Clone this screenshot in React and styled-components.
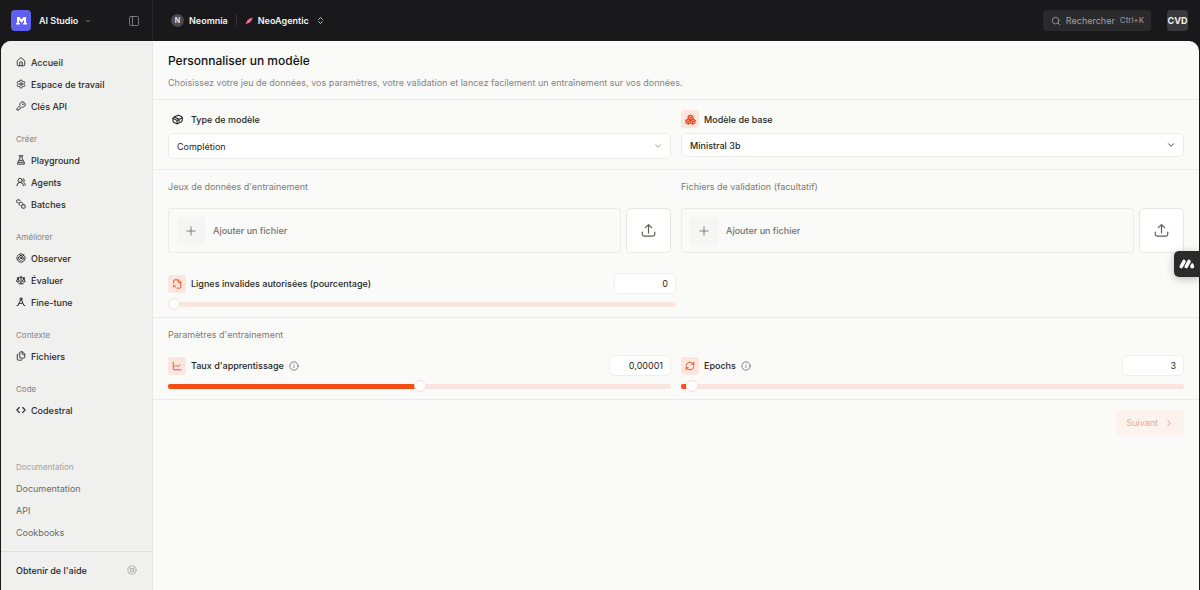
import React, { useState } from "react";
import styled, { createGlobalStyle } from "styled-components";
import {
  Boxes,
  ChartLine,
  ChevronDown,
  ChevronRight,
  ChevronsUpDown,
  Files,
  House,
  Info,
  KeyRound,
  LifeBuoy,
  PanelLeft,
  Plus,
  Radar,
  RefreshCw,
  Scale,
  Search,
  Settings,
  UsersRound,
} from "lucide-react";

const Svg = ({ size = 10, stroke = 2.2, children }) => (
  <svg
    width={size}
    height={size}
    viewBox="0 0 24 24"
    fill="none"
    stroke="currentColor"
    strokeWidth={stroke}
    strokeLinecap="round"
    strokeLinejoin="round"
    aria-hidden="true"
  >
    {children}
  </svg>
);

const LogoIcon = () => (
  <svg width="11" height="8" viewBox="0 0 22 16" fill="#fff" aria-hidden="true">
    <path d="M2 0h5l4 5 4-5h5v12h2v3h-8v-3h2V6l-5 5.500L6 6v6h2v3H0v-3h2z" />
  </svg>
);

const FlaskIcon = () => (
  <Svg>
    <path d="M7.500 2h9M9.500 2v6L4 18v4h16v-4L14.500 8V2" />
    <path d="M9 13h6M6 17.500h12" />
  </Svg>
);

const BatchIcon = () => (
  <Svg>
    <path d="M5 9H4a2.500 2.500 0 0 1-2.500-2.500v-2A2.500 2.500 0 0 1 4 2h3.500A2.500 2.500 0 0 1 10 4" />
    <path d="M10 15.500A2.500 2.500 0 0 1 7.500 13v-2.500A2.500 2.500 0 0 1 10 8h3.500a2.500 2.500 0 0 1 2.500 2" />
    <rect x="13.500" y="13.500" width="8.500" height="8.500" rx="2.500" />
  </Svg>
);

const CompassIcon = () => (
  <Svg stroke={2.4}>
    <circle cx="12" cy="4.500" r="2.500" />
    <path d="M10.800 7 5 20.500H2.500M13.200 7 19 20.500h2.500M7.500 15.500c3 .8 6 .3 8.500-1.500" />
  </Svg>
);

const CodeIcon = () => (
  <Svg stroke={2.6}>
    <path d="m8 6-6 6 6 6M16 6l6 6-6 6" />
  </Svg>
);

const CubeIcon = () => (
  <Svg size={11} stroke={2.4}>
    <path d="M2 9.500 5 6l9-3.500 6.500 3L22.500 8v6L20 17.500l-9 4L3.500 18 2 15z" />
    <path d="m2 9.500 9 4.500 11.500-6M11 14v7M6.500 7l9 4.500v4.500" />
  </Svg>
);

const InvalidFileIcon = () => (
  <Svg>
    <path d="M4 10V4.500A2.500 2.500 0 0 1 6.500 2H15l6 6v11.500a2.500 2.500 0 0 1-2.500 2.500H12" />
    <path d="M14.500 2v6H21M3 14.500l5.500 5.500M8.500 14.500 3 20" />
  </Svg>
);

const UploadIcon = () => (
  <Svg size={15} stroke={1.9}>
    <path d="M12 16V2.500M7 7.500l5-5 5 5" />
    <path d="M2 14.500V18a3 3 0 0 0 3 3h14a3 3 0 0 0 3-3v-3.500" />
  </Svg>
);

const FeatherIcon = () => (
  <svg width="8" height="8" viewBox="0 0 16 16" aria-hidden="true">
    <path d="M1 15 3.500 8.500C6 4 10 1.500 15 1c0 5-2.500 8.500-7 11l-4.500.5z" fill="#e0587c" />
    <path d="M2 14 11 5" stroke="#f7b9c8" strokeWidth="1.500" />
  </svg>
);

const WidgetLogo = () => (
  <svg width="16" height="10" viewBox="0 0 16 10" aria-hidden="true">
    <path d="M2.300 7.500 5 2.500M7.300 7.500 10 2.500" stroke="#fff" strokeWidth="3.600" strokeLinecap="round" />
    <path d="M13.200 3.800c1.200 1.600 2 2.500 2 3.600a2 2 0 0 1-4 0c0-1.100.8-2 2-3.600z" fill="#fff" />
  </svg>
);

const navGroups = [
  {
    items: [
      { label: "Accueil", icon: <House size={10} strokeWidth={2.2} /> },
      { label: "Espace de travail", icon: <Settings size={10} strokeWidth={2.2} /> },
      { label: "Clés API", icon: <KeyRound size={10} strokeWidth={2.2} /> },
    ],
  },
  {
    title: "Créer",
    items: [
      { label: "Playground", icon: <FlaskIcon /> },
      { label: "Agents", icon: <UsersRound size={10} strokeWidth={2.2} /> },
      { label: "Batches", icon: <BatchIcon /> },
    ],
  },
  {
    title: "Améliorer",
    items: [
      { label: "Observer", icon: <Radar size={10} strokeWidth={2.4} /> },
      { label: "Évaluer", icon: <Scale size={10} strokeWidth={2.4} /> },
      { label: "Fine-tune", icon: <CompassIcon /> },
    ],
  },
  {
    title: "Contexte",
    items: [{ label: "Fichiers", icon: <Files size={10} strokeWidth={2.2} /> }],
  },
  { title: "Code", items: [{ label: "Codestral", icon: <CodeIcon /> }] },
];

const docLinks = ["Documentation", "API", "Cookbooks"];

const Sidebar = () => (
  <SidebarWrapper>
    {navGroups.map((group, index) => (
      <NavGroup key={index}>
        {group.title && <GroupTitle>{group.title}</GroupTitle>}
        {group.items.map((item) => (
          <NavLink href="#" key={item.label}>
            {item.icon}
            {item.label}
          </NavLink>
        ))}
      </NavGroup>
    ))}
    <DocGroup>
      <GroupTitle $faint>Documentation</GroupTitle>
      {docLinks.map((label) => (
        <NavLink href="#" $muted key={label}>
          {label}
        </NavLink>
      ))}
    </DocGroup>
    <HelpButton type="button">
      Obtenir de l'aide
      <LifeBuoy size={10} color="#a8a7a4" />
    </HelpButton>
  </SidebarWrapper>
);

const SelectField = ({ id, label, icon, tinted, value, tall, strong }) => (
  <Field>
    <FieldLabel htmlFor={id}>
      <IconTile $tinted={tinted}>{icon}</IconTile>
      {label}
    </FieldLabel>
    <SelectBox>
      <Select id={id} defaultValue={value} $tall={tall} $strong={strong}>
        <option>{value}</option>
      </Select>
      <ChevronDown size={10} color={strong ? "#222" : "#8a8985"} />
    </SelectBox>
  </Field>
);

const FilePicker = ({ title }) => (
  <Field>
    <SectionTitle>{title}</SectionTitle>
    <FileRow>
      <AddFile type="button">
        <PlusTile>
          <Plus size={14} strokeWidth={1.6} />
        </PlusTile>
        Ajouter un fichier
      </AddFile>
      <UploadButton type="button" aria-label="Importer">
        <UploadIcon />
      </UploadButton>
    </FileRow>
  </Field>
);

const SliderField = ({ id, label, icon, info, text, percent }) => {
  const [value, setValue] = useState(percent);

  return (
    <Field>
      <SliderHeader>
        <FieldLabel htmlFor={id}>
          <IconTile $tinted>{icon}</IconTile>
          {label}
          {info && <Info size={10} color="#6f6e6a" strokeWidth={2} />}
        </FieldLabel>
        <NumberInput id={id} defaultValue={text} />
      </SliderHeader>
      <Slider
        type="range"
        aria-label={label}
        min="0"
        max="100"
        value={value}
        onChange={(e) => setValue(Number(e.target.value))}
        style={{ "--fill": `${value}%` }}
      />
    </Field>
  );
};

const App = () => (
  <Page>
    <GlobalStyle />
    <TopBar>
      <Brand>
        <Logo>
          <LogoIcon />
        </Logo>
        <BrandButton type="button">
          AI Studio
          <ChevronDown size={6} color="#a1a1a6" strokeWidth={3} />
        </BrandButton>
        <PanelButton type="button" aria-label="Réduire le menu">
          <PanelLeft size={12} strokeWidth={1.6} />
        </PanelButton>
      </Brand>
      <Crumbs>
        <CrumbButton type="button">
          <OrgBadge>N</OrgBadge>
          Neomnia
        </CrumbButton>
        <CrumbDivider />
        <CrumbButton type="button">
          <FeatherIcon />
          NeoAgentic
          <SortIcon size={9} />
        </CrumbButton>
      </Crumbs>
      <SearchButton type="button">
        <Search size={10} />
        Rechercher
        <Shortcut>Ctrl+K</Shortcut>
      </SearchButton>
      <Avatar type="button">CVD</Avatar>
    </TopBar>
    <Body>
      <Sidebar />
      <Main>
        <Header>
          <Title>Personnaliser un modèle</Title>
          <Subtitle>
            Choisissez votre jeu de données, vos paramètres, votre validation et lancez
            facilement un entraînement sur vos données.
          </Subtitle>
        </Header>
        <ModelSection>
          <SelectField id="type" label="Type de modèle" icon={<CubeIcon />} value="Complétion" tall />
          <SelectField
            id="base"
            label="Modèle de base"
            icon={<Boxes size={11} strokeWidth={2.6} />}
            value="Ministral 3b"
            tinted
            strong
          />
        </ModelSection>
        <DataSection>
          <Columns>
            <FilePicker title="Jeux de données d'entrainement" />
            <FilePicker title="Fichiers de validation (facultatif)" />
          </Columns>
          <HalfWidth>
            <SliderField
              id="invalid"
              label="Lignes invalides autorisées (pourcentage)"
              icon={<InvalidFileIcon />}
              text="0"
              percent={0}
            />
          </HalfWidth>
        </DataSection>
        <TrainingSection>
          <SectionTitle>Paramètres d'entrainement</SectionTitle>
          <Columns>
            <SliderField
              id="rate"
              label="Taux d'apprentissage"
              icon={<ChartLine size={10} strokeWidth={2.2} />}
              text="0,00001"
              percent={50}
              info
            />
            <SliderField
              id="epochs"
              label="Epochs"
              icon={<RefreshCw size={10} strokeWidth={2.2} />}
              text="3"
              percent={1}
              info
            />
          </Columns>
        </TrainingSection>
        <Actions>
          <NextButton type="button" disabled>
            Suivant
            <ChevronRight size={10} strokeWidth={2.5} />
          </NextButton>
        </Actions>
      </Main>
    </Body>
    <Widget type="button" aria-label="Assistant">
      <WidgetLogo />
    </Widget>
  </Page>
);

const GlobalStyle = createGlobalStyle`
  * {
    box-sizing: border-box;
  }

  body {
    margin: 0;
    background: #19191b;
    color: #262626;
    font-family: Inter, "Liberation Sans", sans-serif;
    font-size: 9px;
    line-height: 13px;
  }

  button, input, select {
    margin: 0;
    padding: 0;
    border: 0;
    background: none;
    color: inherit;
    font: inherit;
  }

  svg {
    flex: none;
  }
`;

const Page = styled.div`
  display: flex;
  flex-direction: column;
  min-height: 100vh;
`;

const TopBar = styled.header`
  display: flex;
  align-items: center;
  height: 41px;
  padding-right: 12px;
  color: #f2f2f3;
`;

const Brand = styled.div`
  display: flex;
  align-items: center;
  align-self: stretch;
  width: 153px;
  padding: 0 12px 0 11px;
  border-right: 1px solid #29292c;
`;

const Logo = styled.div`
  display: flex;
  align-items: center;
  justify-content: center;
  width: 20px;
  height: 21px;
  margin-right: 8px;
  border-radius: 4px;
  background: #615ff0;
`;

const BrandButton = styled.button`
  display: flex;
  align-items: center;
  gap: 7px;
  font-weight: 600;
`;

const PanelButton = styled.button`
  display: flex;
  margin-left: auto;
  color: #8b8b90;
`;

const Crumbs = styled.nav`
  display: flex;
  align-items: center;
  flex: 1;
  gap: 8px;
  padding-left: 18px;
`;

const CrumbButton = styled.button`
  display: flex;
  align-items: center;
  gap: 5px;
  font-weight: 600;
`;

const OrgBadge = styled.span`
  display: flex;
  align-items: center;
  justify-content: center;
  width: 13px;
  height: 13px;
  border-radius: 50%;
  background: #4a4a4e;
  font-size: 7px;
`;

const CrumbDivider = styled.span`
  width: 1px;
  height: 13px;
  background: #323235;
`;

const SortIcon = styled(ChevronsUpDown)`
  margin-left: 2px;
`;

const SearchButton = styled.button`
  display: flex;
  align-items: center;
  gap: 5px;
  height: 21px;
  margin-right: 16px;
  padding: 0 7px 0 8px;
  border-radius: 4px;
  background: #2a2a2d;
  color: #a0a0a5;
`;

const Shortcut = styled.span`
  font-size: 8px;
`;

const Avatar = styled.button`
  width: 21px;
  height: 21px;
  display: flex;
  align-items: center;
  justify-content: center;
  border-radius: 4px;
  background: #39393c;
  font-weight: 700;
`;

const Body = styled.div`
  display: flex;
  flex: 1;
  margin: 0 1px;
  border-radius: 10px 10px 0 0;
  background: #fafaf8;
  overflow: hidden;
`;

const SidebarWrapper = styled.aside`
  display: flex;
  flex: none;
  flex-direction: column;
  gap: 12px;
  width: 152px;
  padding-top: 10px;
  border-right: 1px solid #e6e6e3;
  background: #f0f0ee;
`;

const NavGroup = styled.nav`
  display: flex;
  flex-direction: column;
  padding: 0 15px;
`;

const DocGroup = styled(NavGroup)`
  margin-top: auto;
  margin-bottom: -4px;
`;

const GroupTitle = styled.div`
  color: ${(props) => (props.$faint ? "#a3a29e" : "#85847f")};
  font-size: 8px;
  line-height: 20px;
`;

const NavLink = styled.a`
  display: flex;
  align-items: center;
  gap: 5px;
  height: 22px;
  color: ${(props) => (props.$muted ? "#6b6a66" : "#2a2a28")};
  font-weight: ${(props) => (props.$muted ? 400 : 500)};
  text-decoration: none;
`;

const HelpButton = styled.button`
  display: flex;
  align-items: center;
  justify-content: space-between;
  height: 39px;
  padding: 0 15px 2px;
  border-top: 1px solid #dfdfdc;
  font-weight: 500;
`;

const Main = styled.main`
  flex: 1;
  min-width: 0;
`;

const Section = styled.section`
  padding: 0 15px;
  border-bottom: 1px solid #ebebe8;
`;

const Header = styled(Section)`
  padding-top: 12px;
  padding-bottom: 10px;
`;

const Title = styled.h1`
  margin: 0 0 7px;
  color: #111;
  font-size: 12px;
  font-weight: 500;
  line-height: 16px;
`;

const Subtitle = styled.p`
  margin: 0;
  color: #85847f;
`;

const Columns = styled.div`
  display: grid;
  grid-template-columns: 1fr 1fr;
  gap: 10px;
`;

const ModelSection = styled(Section)`
  display: grid;
  grid-template-columns: 1fr 1fr;
  align-items: start;
  gap: 10px;
  padding-top: 10px;
  padding-bottom: 10px;
`;

const DataSection = styled(Section)`
  padding-top: 10px;
  padding-bottom: 7px;
`;

const TrainingSection = styled(Section)`
  padding-top: 10px;
  padding-bottom: 7px;

  ${Columns} {
    margin-top: 14px;
  }
`;

const HalfWidth = styled.div`
  width: 50%;
  margin-top: 20px;
`;

const Field = styled.div`
  min-width: 0;
`;

const FieldLabel = styled.label`
  display: flex;
  align-items: center;
  gap: 5px;
  font-weight: 500;
`;

const IconTile = styled.span`
  display: flex;
  align-items: center;
  justify-content: center;
  width: 18px;
  height: 18px;
  border-radius: 3px;
  background: ${(props) => (props.$tinted ? "#fce6e0" : "none")};
  color: ${(props) => (props.$tinted ? "#e8491d" : "#262626")};
`;

const SelectBox = styled.div`
  position: relative;
  margin-top: 5px;

  svg {
    position: absolute;
    top: calc(50% - 5px);
    right: 8px;
    pointer-events: none;
  }
`;

const Select = styled.select`
  display: block;
  width: 100%;
  height: ${(props) => (props.$tall ? 26 : 24)}px;
  padding: 0 8px;
  border: 1px solid #ebebe8;
  border-radius: 5px;
  background: #fff;
  font-weight: ${(props) => (props.$strong ? 500 : 400)};
  appearance: none;
`;

const SectionTitle = styled.h2`
  margin: 0;
  color: #7c7b76;
  font-size: 9px;
  font-weight: 400;
  line-height: 13px;
`;

const FileRow = styled.div`
  display: flex;
  gap: 5px;
  margin-top: 15px;
`;

const AddFile = styled.button`
  display: flex;
  flex: 1;
  align-items: center;
  gap: 8px;
  height: 45px;
  padding: 0 8px;
  border: 1px solid #ebebe8;
  border-radius: 3px;
  color: #73726e;
  font-weight: 500;
`;

const PlusTile = styled.span`
  display: flex;
  align-items: center;
  justify-content: center;
  width: 28px;
  height: 28px;
  border-radius: 3px;
  background: #f5f5f3;
`;

const UploadButton = styled.button`
  display: flex;
  align-items: center;
  justify-content: center;
  width: 45px;
  height: 45px;
  border: 1px solid #e6e6e3;
  border-radius: 5px;
  background: #fff;
  color: #5c5b57;
`;

const SliderHeader = styled.div`
  display: flex;
  align-items: center;
  justify-content: space-between;
`;

const NumberInput = styled.input`
  width: 62px;
  height: 21px;
  padding: 0 7px;
  border: 1px solid #efefec;
  border-radius: 5px;
  background: #fff;
  text-align: right;
`;

const Slider = styled.input`
  display: block;
  width: 100%;
  height: 12px;
  margin-top: 4px;
  appearance: none;

  &::-webkit-slider-runnable-track {
    height: 5px;
    border-radius: 2px;
    background: linear-gradient(to right, #f54e14 var(--fill), #fae6e0 var(--fill));
  }

  &::-webkit-slider-thumb {
    width: 12px;
    height: 12px;
    margin-top: -4px;
    border: 1px solid #fadfd7;
    border-radius: 50%;
    background: #fff;
    appearance: none;
  }
`;

const Actions = styled.div`
  display: flex;
  justify-content: flex-end;
  padding: 10px 15px;
`;

const NextButton = styled.button`
  display: flex;
  align-items: center;
  gap: 6px;
  height: 25px;
  padding: 0 10px;
  border-radius: 3px;
  background: #fdf3ee;
  color: #f0a695;
`;

const Widget = styled.button`
  position: fixed;
  top: 251px;
  right: 0;
  display: flex;
  align-items: center;
  justify-content: center;
  width: 26px;
  height: 26px;
  border-radius: 5px 0 0 5px;
  background: #2b2b2b;
  box-shadow: 0 2px 8px rgba(0, 0, 0, 0.25);
`;

export default App;
